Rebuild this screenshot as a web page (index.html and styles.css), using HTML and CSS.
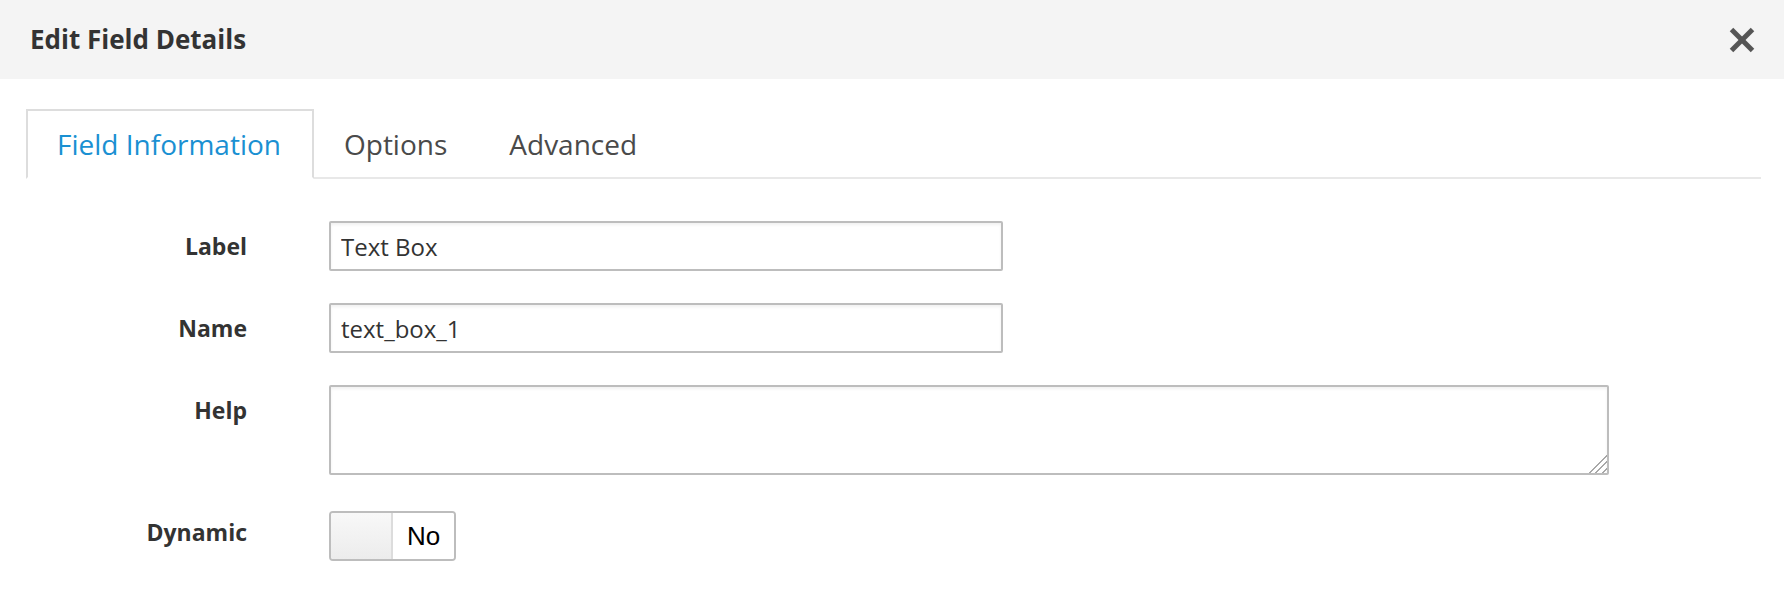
FILE: index.html
```html
<!DOCTYPE html>
<html lang="en">
<head>
<meta charset="utf-8">
<title>Edit Field Details</title>
<link rel="stylesheet" href="styles.css">
</head>
<body>
<div class="dialog">
  <header class="dialog-header">
    <h1 class="dialog-title">Edit Field Details</h1>
    <button class="close-btn" type="button" aria-label="Close">
      <svg width="26" height="26" viewBox="0 0 26 26" aria-hidden="true">
        <line x1="2.5" y1="2.5" x2="23.5" y2="23.5" stroke="#555" stroke-width="5"/>
        <line x1="23.5" y1="2.5" x2="2.5" y2="23.5" stroke="#555" stroke-width="5"/>
      </svg>
    </button>
  </header>
  <div class="dialog-body">
    <ul class="tabs">
      <li class="tab active">Field Information</li>
      <li class="tab">Options</li>
      <li class="tab">Advanced</li>
    </ul>
    <form class="form">
      <label class="form-label" for="f-label">Label</label>
      <input class="text-input" id="f-label" type="text" value="Text Box">

      <label class="form-label" for="f-name">Name</label>
      <input class="text-input" id="f-name" type="text" value="text_box_1">

      <label class="form-label" for="f-help">Help</label>
      <textarea class="text-area" id="f-help"></textarea>

      <span class="form-label">Dynamic</span>
      <div class="toggle">
        <span class="toggle-knob"></span>
        <span class="toggle-text">No</span>
      </div>
    </form>
  </div>
</div>
</body>
</html>
```
FILE: styles.css
```css
* {
  box-sizing: border-box;
}

html, body {
  margin: 0;
  padding: 0;
  background: #ffffff;
}

body {
  font-family: "Open Sans", "DejaVu Sans", sans-serif;
  color: #333333;
}

.dialog-header {
  height: 79px;
  background: #f4f4f4;
  display: flex;
  align-items: center;
  justify-content: space-between;
  padding: 0 29px 0 30px;
}

.dialog-title {
  margin: 0 0 2px 0;
  font-size: 26px;
  font-weight: 700;
  color: #333333;
}

.close-btn {
  border: 0;
  background: none;
  padding: 0;
  width: 26px;
  height: 26px;
  display: flex;
  cursor: pointer;
}

.dialog-body {
  padding: 30px 23px 0 26px;
}

.tabs {
  list-style: none;
  margin: 0;
  padding: 0;
  display: flex;
  border-bottom: 2px solid #e8e8e8;
}

.tab {
  font-size: 28px;
  line-height: 66px;
  padding: 0 28px;
  margin-right: 2px;
  margin-bottom: -2px;
  border: 2px solid transparent;
  color: #4a4a4a;
}

.tab.active {
  color: #1a90d2;
  padding: 0 31px 0 29px;
  margin-right: 0;
  border-color: #dddddd;
  border-bottom-color: #ffffff;
  background: #ffffff;
}

.form {
  display: grid;
  grid-template-columns: 221px auto;
  column-gap: 82px;
  row-gap: 32px;
  padding-top: 42px;
  align-items: start;
  justify-items: start;
}

.form-label {
  justify-self: end;
  font-size: 23px;
  font-weight: 700;
  line-height: 50px;
  color: #333333;
}

.text-input,
.text-area {
  font-family: "Open Sans", "DejaVu Sans", sans-serif;
  font-size: 24px;
  color: #333333;
  border: 2px solid #bdbdbd;
  border-radius: 2px;
  box-shadow: inset 0 2px 3px rgba(0, 0, 0, 0.06);
  background-color: #ffffff;
  outline: none;
}

.text-input {
  width: 674px;
  height: 50px;
  padding: 0 10px;
}

.text-area {
  width: 1280px;
  height: 90px;
  padding: 6px 10px;
  resize: none;
  margin: 0;
  display: block;
  background-image:
    linear-gradient(135deg, #ffffff 52%, rgba(255, 255, 255, 0) 52%),
    repeating-linear-gradient(135deg, rgba(255, 255, 255, 0) 0 3px, #a8a8a8 3px 4.5px);
  background-size: 21px 21px, 21px 21px;
  background-position: right bottom, right bottom;
  background-repeat: no-repeat;
}

.toggle {
  margin-top: 4px;
  width: 127px;
  height: 50px;
  border: 2px solid #bdbdbd;
  border-radius: 4px;
  display: flex;
  overflow: hidden;
}

.toggle-knob {
  width: 62px;
  background: linear-gradient(#f8f8f8, #ececec);
  border-right: 2px solid #dcdcdc;
}

.toggle-text {
  flex: 1;
  display: flex;
  align-items: center;
  justify-content: center;
  font-family: "Liberation Sans", Arial, sans-serif;
  font-size: 26px;
  color: #000000;
  background: #ffffff;
}
```
